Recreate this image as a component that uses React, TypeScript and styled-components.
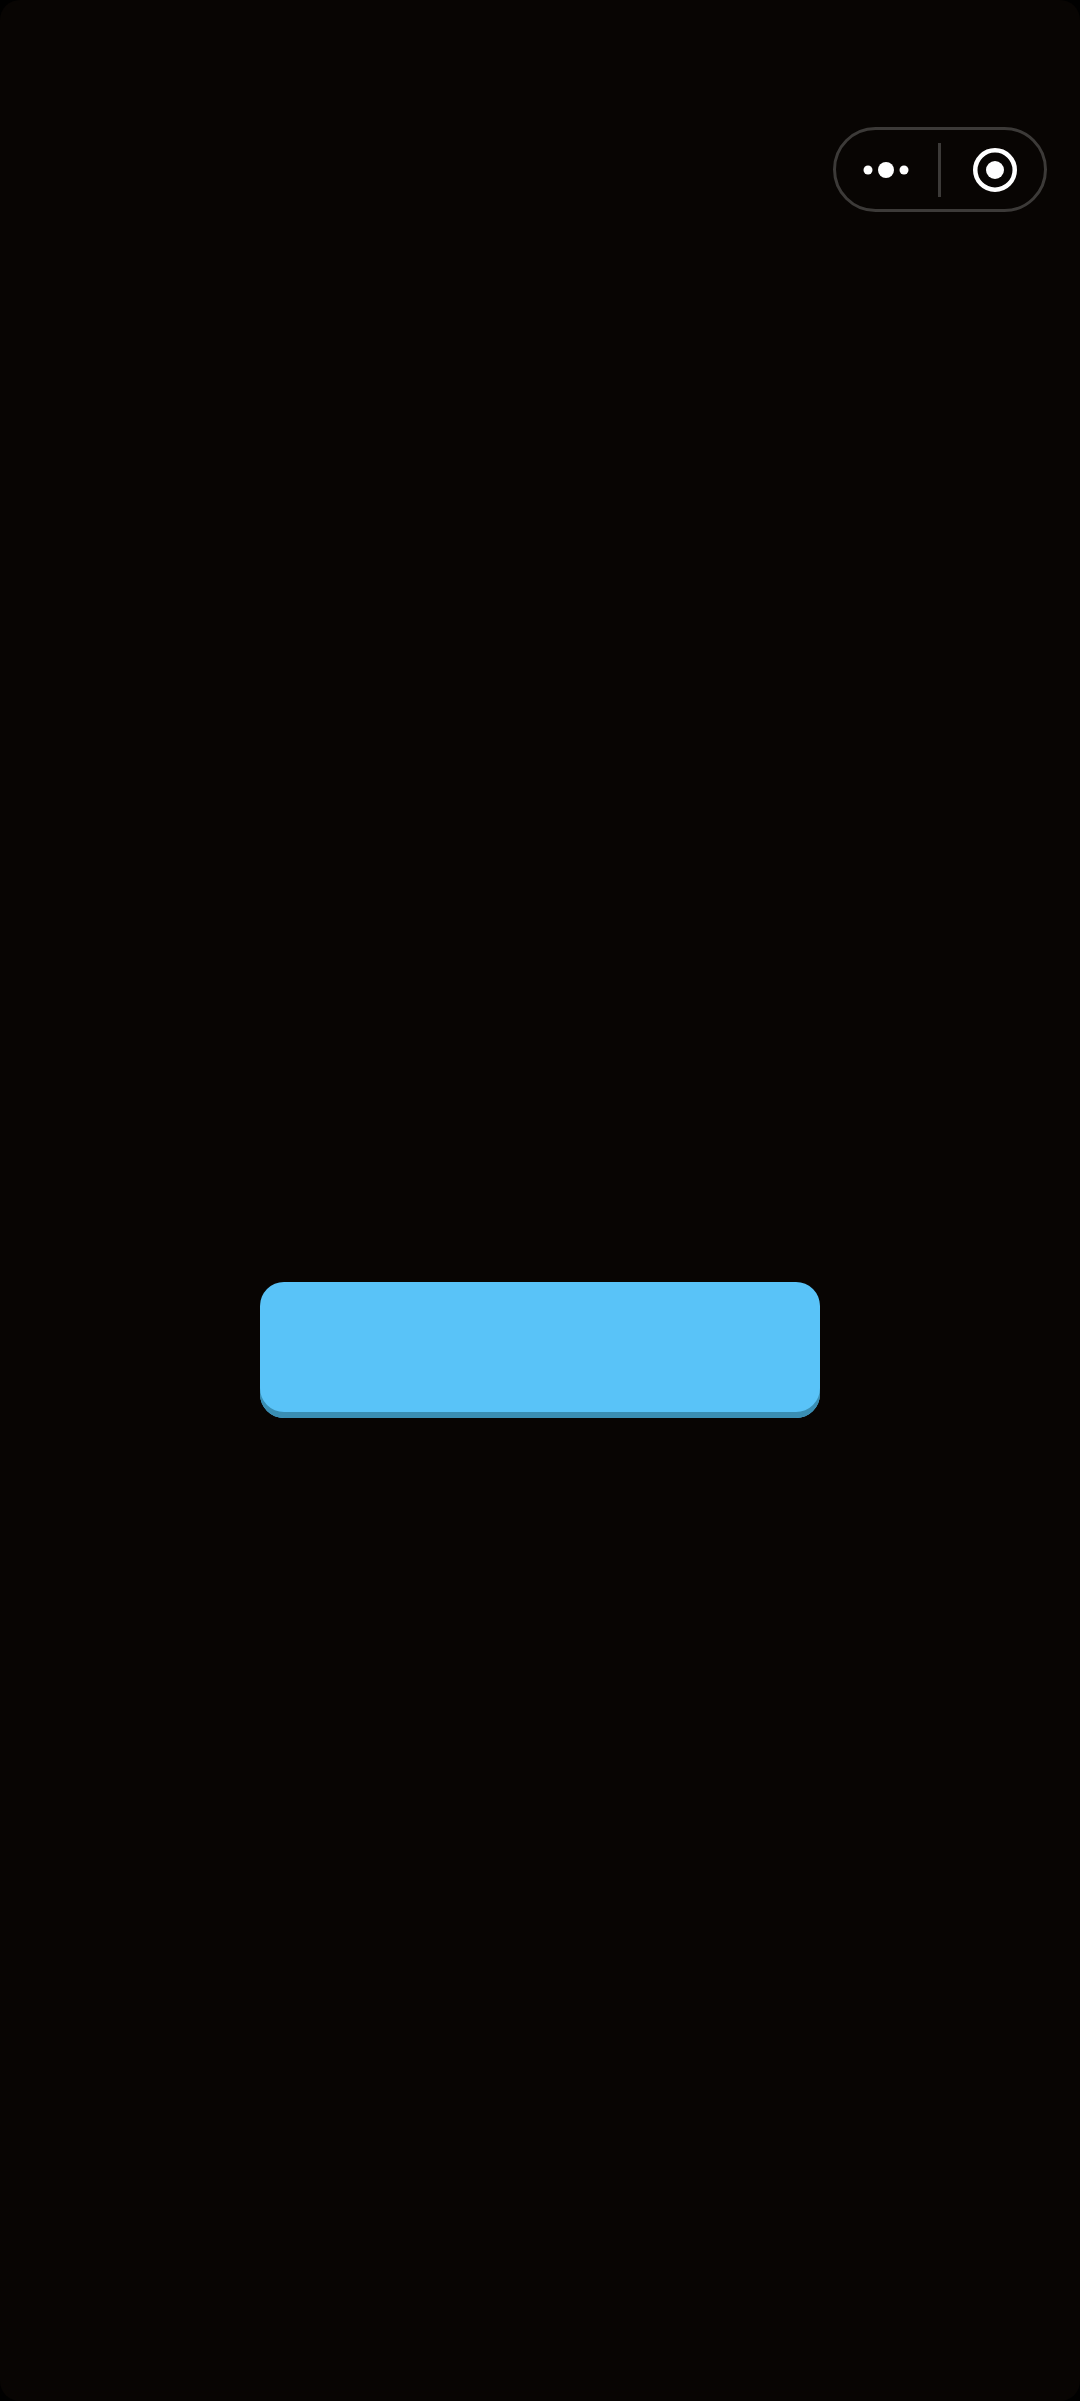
import React from "react";
import styled, { createGlobalStyle } from "styled-components";

const Global = createGlobalStyle`
  html, body { margin: 0; padding: 0; background: #000; }
  #root { width: 1080px; height: 2401px; }
`;

const Screen = styled.main`
  position: relative;
  box-sizing: border-box;
  width: 1080px;
  height: 2401px;
  padding-top: 1282px;
  display: flex;
  flex-direction: column;
  align-items: center;
  background: #080503;
  border-radius: 20px;
  overflow: hidden;
`;

const Capsule = styled.div`
  position: absolute;
  top: 127px;
  left: 833px;
  box-sizing: border-box;
  width: 214px;
  height: 85px;
  display: flex;
  align-items: center;
  border: 3px solid #3c3a38;
  border-radius: 43px;
`;

const CapsuleSlot = styled.div<{ $padLeft?: number; $padRight?: number }>`
  flex: 1;
  box-sizing: border-box;
  height: 100%;
  padding: 0 ${(p) => p.$padRight ?? 0}px 0 ${(p) => p.$padLeft ?? 0}px;
  display: flex;
  align-items: center;
  justify-content: center;
`;

const Divider = styled.div`
  flex: none;
  width: 3px;
  height: 54px;
  background: #3c3a38;
`;

const ActionButton = styled.button`
  display: block;
  box-sizing: border-box;
  width: 560px;
  height: 136px;
  padding: 0;
  border: 0;
  border-radius: 24px;
  background: #59c3f8;
  box-shadow: inset 0 -6px 0 #3a8eb3;
`;

const MoreIcon = () => (
  <svg width="46" height="18" viewBox="0 0 46 18" aria-hidden="true">
    <circle cx="5" cy="9" r="4.5" fill="#fff" />
    <circle cx="23" cy="9" r="8" fill="#fff" />
    <circle cx="41" cy="9" r="4.5" fill="#fff" />
  </svg>
);

const CloseIcon = () => (
  <svg width="46" height="46" viewBox="0 0 46 46" aria-hidden="true">
    <circle cx="23" cy="23" r="19.75" fill="none" stroke="#fff" strokeWidth="4.5" />
    <circle cx="23" cy="23" r="9" fill="#fff" />
  </svg>
);

export default function App() {
  return (
    <>
      <Global />
      <Screen>
        <Capsule>
          <CapsuleSlot $padRight={2.5}>
            <MoreIcon />
          </CapsuleSlot>
          <Divider />
          <CapsuleSlot $padLeft={4.5}>
            <CloseIcon />
          </CapsuleSlot>
        </Capsule>
        <ActionButton type="button" aria-label="button" />
      </Screen>
    </>
  );
}
